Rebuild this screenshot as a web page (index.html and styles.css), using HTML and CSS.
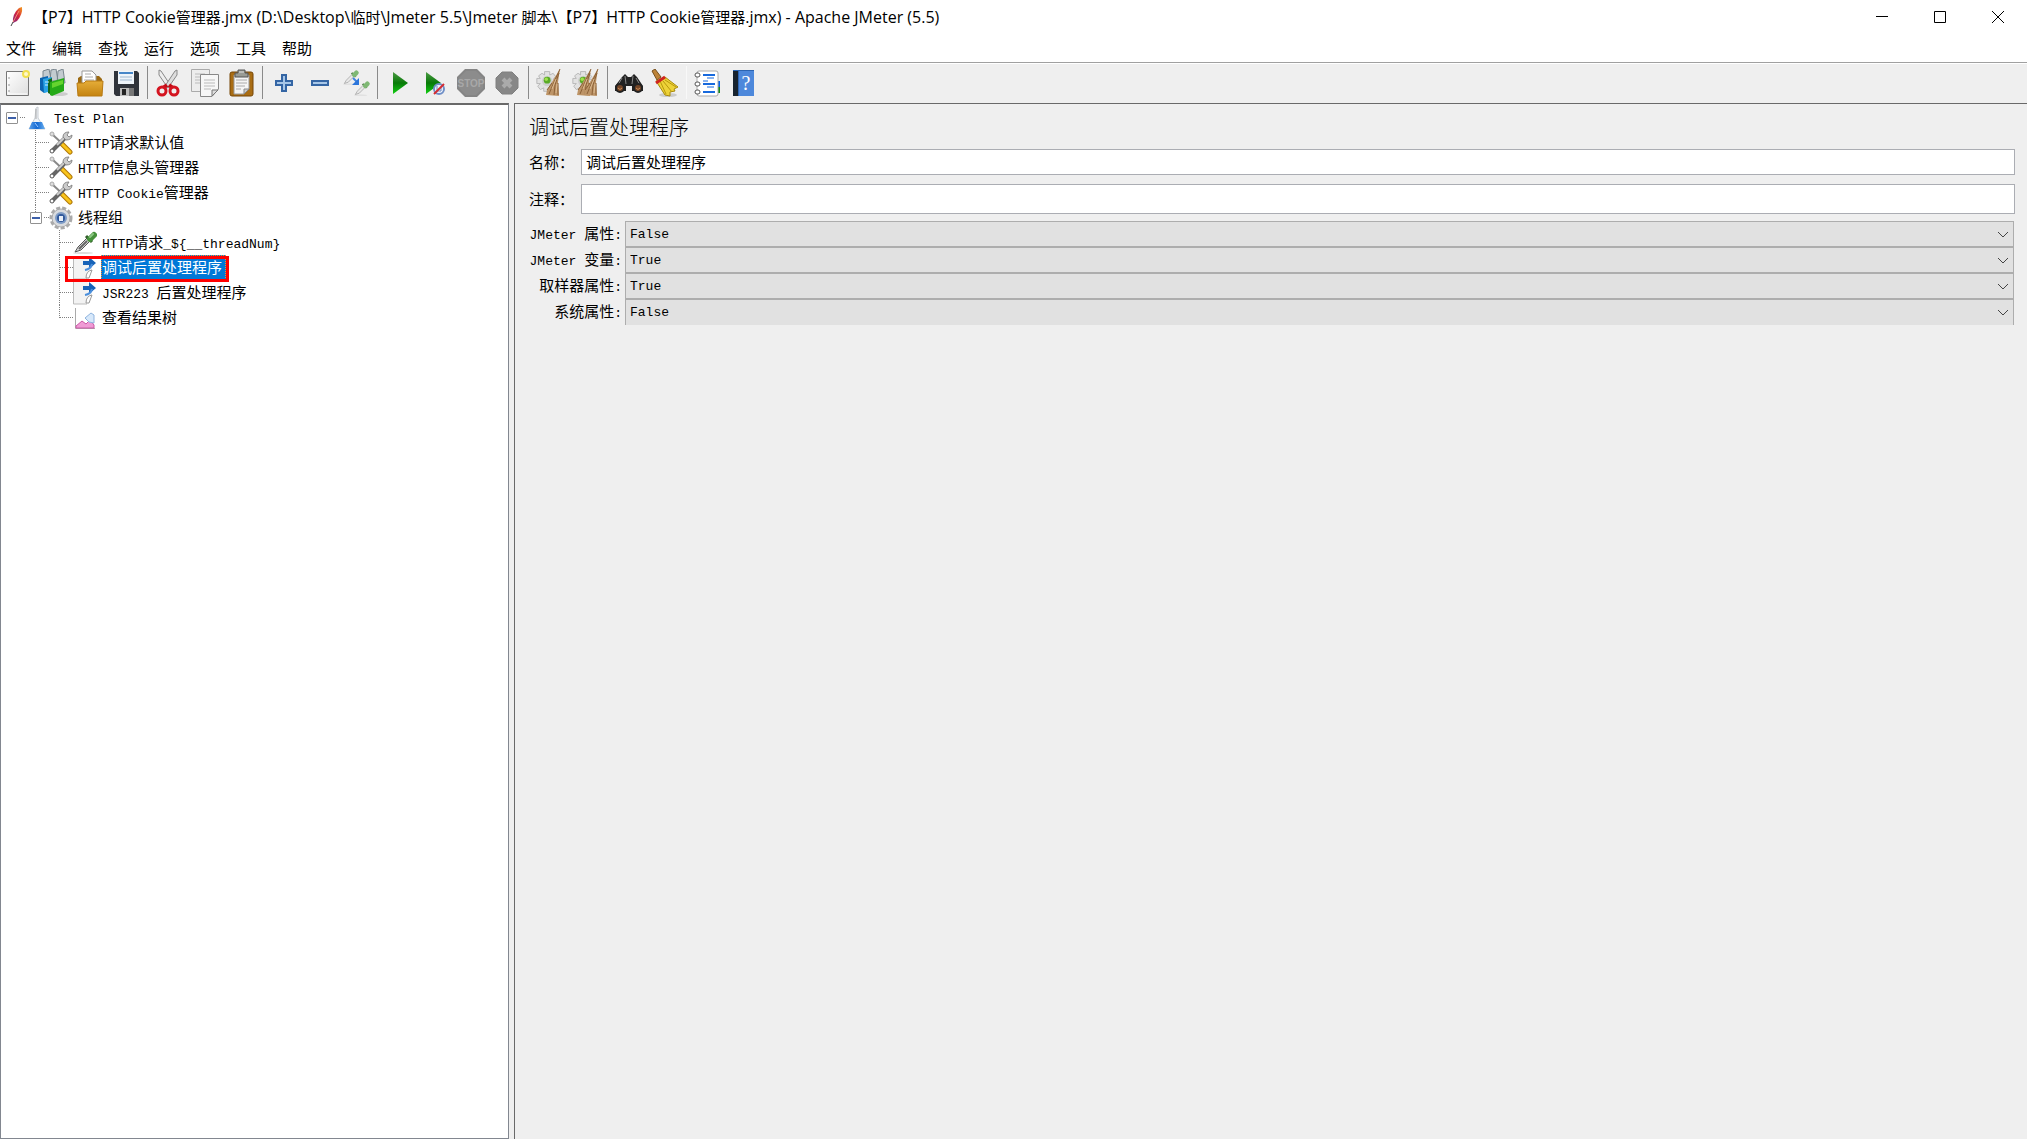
FILE: index.html
```html
<!DOCTYPE html>
<html lang="zh-CN">
<head>
<meta charset="utf-8">
<title>【P7】HTTP Cookie管理器.jmx - Apache JMeter (5.5)</title>
<link rel="stylesheet" href="styles.css">
</head>
<body>
<svg class="defs" aria-hidden="true">
  <defs>
    <linearGradient id="gGreen" x1="0" y1="0" x2="0" y2="1"><stop offset="0" stop-color="#4d9a45"/><stop offset=".5" stop-color="#087a08"/><stop offset="1" stop-color="#12cf12"/></linearGradient>
    <linearGradient id="gGold" x1="0" y1="0" x2="0" y2="1"><stop offset="0" stop-color="#e5ad38"/><stop offset="1" stop-color="#c48310"/></linearGradient>
    <linearGradient id="gPaper" x1="0" y1="0" x2="1" y2="1"><stop offset="0" stop-color="#fff"/><stop offset="1" stop-color="#dedede"/></linearGradient>
    <linearGradient id="gFlask" x1="0" y1="0" x2="1" y2="0"><stop offset="0" stop-color="#5aa0ea"/><stop offset=".5" stop-color="#1268d2"/><stop offset="1" stop-color="#6bb0f0"/></linearGradient>
    <linearGradient id="gFeather" x1="0" y1="1" x2="1" y2="0"><stop offset="0" stop-color="#7a2a85"/><stop offset=".5" stop-color="#d3223f"/><stop offset="1" stop-color="#f6a01c"/></linearGradient>
    <symbol id="tools" viewBox="0 0 24 24">
      <path d="M4 4L17 16" stroke="#888" stroke-width="2"/>
      <circle cx="3" cy="3" r="2" fill="#ddd" stroke="#aaa"/>
      <path d="M13 13L21 21" stroke="#b07808" stroke-width="5" stroke-linecap="round"/>
      <path d="M13 13L21 21" stroke="#f9c51c" stroke-width="3" stroke-linecap="round"/>
      <path d="M3 20L17 6" stroke="#666" stroke-width="4"/>
      <path d="M8 14L17 5" stroke="#ccc" stroke-width="2"/>
      <path d="M14 6Q14 1 20 1L18 4L20 6L23 4Q23 9 17 9Z" fill="#ccc" stroke="#888"/>
      <circle cx="3" cy="20" r="2" fill="#fff" stroke="#555"/>
    </symbol>
    <symbol id="post" viewBox="0 0 24 24">
      <path d="M0 1H14L19 6V14L14 23H0Z" fill="#f3f3f3"/>
      <path d="M.5 1V23H14" fill="none" stroke="#bbb"/>
      <path d="M13 22Q13 15 19 14L16 22Z" fill="#fff" stroke="#999"/>
      <path d="M10 5H16V1L23 7L16 13V9H10Z" fill="#1763b8"/>
      <path d="M12 14Q18 13 19 8" fill="none" stroke="#4b8fdc" stroke-width="2"/>
    </symbol>
    <symbol id="dropper" viewBox="0 0 24 24">
      <ellipse cx="10" cy="22" rx="10" ry="1" fill="#ddd"/>
      <path d="M2 21L5 16L14 7L17 10L8 19Z" fill="#d5d5d5" stroke="#555"/>
      <path d="M6 18L14 10" stroke="#666" stroke-width="2"/>
      <path d="M13 5L19 11" stroke="#315e2b" stroke-width="3"/>
      <path d="M17 8L21 4" stroke="#46913b" stroke-width="6" stroke-linecap="round"/>
      <path d="M17 6L20 3" stroke="#8cc883" stroke-width="2" stroke-linecap="round"/>
    </symbol>
    <symbol id="dropper-light" viewBox="0 0 24 24">
      <ellipse cx="10" cy="22" rx="10" ry="1" fill="#ddd"/>
      <path d="M2 21L5 16L14 7L17 10L8 19Z" fill="#e8e8e8" stroke="#999"/>
      <path d="M13 5L19 11" stroke="#4a7a42" stroke-width="3"/>
      <path d="M17 8L20 5" stroke="#7fb874" stroke-width="7" stroke-linecap="round"/>
    </symbol>
    <symbol id="gear" viewBox="0 0 28 28">
      <path d="M10 3H16V7L20 5L23 9L20 12H25V18H20L22 22L18 25L15 22V26H9V22L5 24L2 20L5 17H1V11H5L3 8L7 5L10 7Z" fill="#e2e2e2" stroke="#b2b2b2"/>
      <circle cx="13" cy="14" r="6" fill="#cecece"/><circle cx="13" cy="13" r="4" fill="#59ab26"/><circle cx="12" cy="12" r="2" fill="#a0df4d"/>
    </symbol>
    <symbol id="straw" viewBox="0 0 16 28">
      <path d="M14 0L12 13L13 27L0 26L1 21L6 13L9 8Z" fill="#bd9467"/>
      <path d="M14 0L8 13L3 25M13 4L9 16L8 26M12 14L12 26M6 14L1 21" stroke="#8c6238" fill="none"/>
      <path d="M10 10L6 20M11 15L10 24" stroke="#ddbc92"/>
    </symbol>
  </defs>
</svg>

<header class="titlebar">
  <svg class="feather" viewBox="0 0 14 20" aria-hidden="true"><path d="M3 16Q2 7 9 1L12 0Q13 7 7 14Z" fill="url(#gFeather)"/><path d="M3 15L9 4" stroke="#f58a70"/><path d="M3 15L1 19" stroke="#444"/></svg>
  <h1 class="title"><span class="cjk">【</span>P7<span class="cjk">】</span>HTTP Cookie<span class="cjk">管理器</span>.jmx (D:\Desktop\<span class="cjk">临时</span>\Jmeter 5.5\Jmeter <span class="cjk">脚本</span>\<span class="cjk">【</span>P7<span class="cjk">】</span>HTTP Cookie<span class="cjk">管理器</span>.jmx) - Apache JMeter (5.5)</h1>
  <div class="controls">
    <button aria-label="最小化"><svg viewBox="0 0 12 12"><path d="M0 5.500H12"/></svg></button>
    <button aria-label="最大化"><svg viewBox="0 0 12 12"><path d="M.5 .5H11.500V11.500H.5Z"/></svg></button>
    <button aria-label="关闭"><svg viewBox="0 0 12 12"><path d="M0 0L12 12M12 0L0 12"/></svg></button>
  </div>
</header>

<nav class="menubar">
  <button>文件</button><button>编辑</button><button>查找</button><button>运行</button><button>选项</button><button>工具</button><button>帮助</button>
</nav>

<div class="toolbar" role="toolbar">
  <button aria-label="新建"><svg viewBox="0 0 28 28"><path d="M2.500 2.500H24.500V26.500H2.500Z" fill="url(#gPaper)" stroke="#777"/><path d="M4 4V25H23" stroke="#fff" fill="none"/><path d="M5 8V10M5 15V17M5 21V23" stroke="#999"/><circle cx="22" cy="5" r="3" fill="#fff8c9" stroke="#f0df4d" stroke-width="2"/></svg></button>
  <button aria-label="模板"><svg viewBox="0 0 28 28"><ellipse cx="19" cy="25" rx="9" ry="2" fill="#ccc"/><path d="M3 2L9 0L11 10H3ZM11 1L16 0L18 12H10ZM18 2L23 0L25 14H17Z" fill="#c3cbd0" stroke="#78858e"/><path d="M0 9L8 7V22L4 24L0 21Z" fill="#0c63af"/><path d="M3 10L12 8V22L4 24Z" fill="#2aa3e6"/><path d="M8 11L12 9V26L8 24Z" fill="#13661a"/><path d="M10 13L24 9V22L12 27L10 26Z" fill="#25aa17"/><path d="M12 14L23 11V15L12 19Z" fill="#65d42e"/><path d="M5 13H9M5 16H8" stroke="#c9efff"/></svg></button>
  <button aria-label="打开"><svg viewBox="0 0 28 28"><path d="M2 9L5 7H23L26 10V26H2Z" fill="#9c6a12"/><path d="M6 2H16L20 6V15H6Z" fill="#fff" stroke="#999"/><path d="M9 5H15M9 8H17M8 11H18" stroke="#aaa"/><path d="M1 14H8L10 12H27L26 27H2Z" fill="url(#gGold)" stroke="#b87a13"/></svg></button>
  <button aria-label="保存"><svg viewBox="0 0 28 28"><path d="M2 2H25L27 4V27H4L2 25Z" fill="#30343b"/><path d="M6 2H22V15H6Z" fill="#eef4fa"/><path d="M7 4H21" stroke="#4686c8" stroke-width="2"/><path d="M8 8H20M8 11H20" stroke="#9fb8d0"/><path d="M8 19H22V27H8Z" fill="#bbb"/><path d="M10 20H14V26H10Z" fill="#222"/><path d="M17 19H22V27H17Z" fill="#777"/></svg></button>
  <span class="sep"></span>
  <button aria-label="剪切"><svg viewBox="0 0 28 28"><path d="M4 1L6 2L16 17L13 19L4 6Z" fill="#eee" stroke="#888"/><path d="M22 1L20 2L10 17L13 19L22 6Z" fill="#ddd" stroke="#888"/><path d="M12 16L8 19M14 16L18 19" stroke="#c00d16" stroke-width="4"/><circle cx="7" cy="22" r="4" fill="#eee" stroke="#d41420" stroke-width="3"/><circle cx="19" cy="22" r="4" fill="#eee" stroke="#d41420" stroke-width="3"/></svg></button>
  <button aria-label="复制"><svg viewBox="0 0 28 28"><path d="M.5 .5H18.500V22.500H.5Z" fill="#ededed" stroke="#aaa"/><path d="M4 5H14M4 8H9M4 11H9M4 14H9" stroke="#bbb"/><path d="M9.500 5.500H27.500V20L21 27.500H9.500Z" fill="#f7f7f7" stroke="#888"/><path d="M13 11H24M13 14H24M13 17H24M13 20H20" stroke="#bbb"/><path d="M21 27V21H27Z" fill="#ddd" stroke="#777"/></svg></button>
  <button aria-label="粘贴"><svg viewBox="0 0 28 28"><rect x="3" y="3" width="23" height="24" rx="2" fill="#a96d14" stroke="#764706"/><path d="M7 6H22V20L17 25H7Z" fill="#f5f5f5" stroke="#999"/><path d="M17 25V20H22Z" fill="#ccc" stroke="#888"/><path d="M9 11H20M9 14H20M9 17H18M9 20H14" stroke="#aaa"/><path d="M8 8V4H11V1H18V4H21V8Z" fill="#999b94" stroke="#555"/><path d="M12 3H17" stroke="#ddd"/></svg></button>
  <span class="sep"></span>
  <button aria-label="全部展开"><svg viewBox="0 0 28 28"><path d="M12 6H16V12H22V16H16V22H12V16H6V12H12Z" fill="#a7c6e7" stroke="#3465a4" stroke-width="2"/></svg></button>
  <button aria-label="全部折叠"><svg viewBox="0 0 28 28"><path d="M6 12H22V16H6Z" fill="#a7c6e7" stroke="#3465a4" stroke-width="2"/></svg></button>
  <button aria-label="切换"><svg viewBox="0 0 28 28"><use href="#dropper-light" x="1" y="0" width="16" height="17"/><use href="#dropper-light" x="12" y="11" width="16" height="17"/><path d="M11 9L15 13" stroke="#3f83de" stroke-width="2"/><path d="M17 9V16H10Z" fill="#2c76db"/></svg></button>
  <span class="sep"></span>
  <button aria-label="启动"><svg viewBox="0 0 28 28"><path d="M8 3L23 14L8 25Z" fill="url(#gGreen)"/></svg></button>
  <button aria-label="不停顿启动"><svg viewBox="0 0 28 28"><path d="M5 3L20 14L5 25Z" fill="url(#gGreen)"/><circle cx="18" cy="20" r="5" fill="#f2f5fc" stroke="#6f8fc7" stroke-width="2"/><path d="M16 17V22H20V18" stroke="#6688c0" fill="none"/><path d="M13 25L23 15" stroke="#d52b31" stroke-width="2"/></svg></button>
  <button aria-label="停止" disabled><svg viewBox="0 0 28 28"><path d="M8 0H20L28 8V20L20 28H8L0 20V8Z" fill="#858585"/><path d="M9 2H19L26 9V19L19 26H9L2 19V9Z" fill="#8c8c8c"/><text x="14" y="18" text-anchor="middle" class="stop">STOP</text></svg></button>
  <button aria-label="关闭运行" disabled><svg viewBox="0 0 28 28"><path d="M9 3H19L25 9V19L19 25H9L3 19V9Z" fill="#878787" stroke="#808080"/><path d="M10 10L18 18M18 10L10 18" stroke="#ababab" stroke-width="4"/></svg></button>
  <span class="sep"></span>
  <button aria-label="清除"><svg viewBox="0 0 28 28"><use href="#gear" width="24" height="24"/><use href="#straw" x="10" y="0" width="16" height="28"/></svg></button>
  <button aria-label="清除全部"><svg viewBox="0 0 28 28"><use href="#gear" width="24" height="24"/><use href="#straw" x="5" y="0" width="16" height="28"/><use href="#straw" x="12" y="0" width="16" height="28"/></svg></button>
  <span class="sep"></span>
  <button aria-label="查找"><svg viewBox="0 0 28 28"><path d="M7 8L10 5L13 8H16L19 5L22 8L28 17V22H17V17H11V22H0V17Z" fill="#222"/><path d="M7 9L3 16M21 9L25 16M10 7L11 15M18 7L17 15" stroke="#888"/><circle cx="5" cy="19" r="4" fill="#734526" stroke="#222" stroke-width="2"/><circle cx="23" cy="19" r="4" fill="#734526" stroke="#222" stroke-width="2"/><path d="M3 19Q5 22 7 19M21 19Q23 22 25 19" stroke="#ca8b58" fill="none"/></svg></button>
  <button aria-label="重置查找"><svg viewBox="0 0 28 28"><ellipse cx="17" cy="26" rx="9" ry="2" fill="#ccc"/><path d="M1 2L4 0L10 8L6 11Z" fill="#bd8338" stroke="#76501f"/><path d="M5 12L14 8L27 18L23 20L24 22L19 23L19 27L14 26Z" fill="#edd238" stroke="#a8890d"/><path d="M9 12L15 25M12 12L21 23M14 11L25 18" stroke="#b8980d"/><path d="M5 14L14 8" stroke="#cf2420" stroke-width="3"/></svg></button>
  <span class="sep sep-faint"></span>
  <button aria-label="函数助手"><svg viewBox="0 0 28 28"><path d="M23 12H26V18H23Z" fill="#0865e8"/><path d="M23 18H26V24H23Z" fill="#118b15"/><rect x="3" y="2" width="21" height="25" rx="2" fill="#fff" stroke="#aaa"/><path d="M9 6H21M9 15H21M9 23H21" stroke="#1769dd" stroke-width="2"/><path d="M13 9H20M13 18H20M9 12H14" stroke="#1769dd"/><g fill="#fff" stroke="#555"><rect x="1" y="4" width="5" height="4" rx="2"/><rect x="1" y="13" width="5" height="4" rx="2"/><rect x="1" y="21" width="5" height="4" rx="2"/></g></svg></button>
  <button aria-label="帮助"><svg viewBox="0 0 28 28"><path d="M3 1H24V27H3Z" fill="#4d88db"/><path d="M3 1H8V27H3Z" fill="#17232f"/><path d="M8.500 1V27M3 1.500H24" stroke="#2c64b1"/><text x="16" y="21" text-anchor="middle" class="help">?</text></svg></button>
</div>

<main class="split">
  <aside class="tree">
    <ul>
      <li>
        <div class="row"><button class="toggle" aria-label="折叠"></button><span class="stem"></span><svg class="icon" viewBox="0 0 24 24"><path d="M11 2L13 1V12L20 23H4L10 12Z" fill="#eef2f6" stroke="#c8cdd3"/><path d="M7 16H17L20 23H4Z" fill="url(#gFlask)"/><path d="M11 3V13" stroke="#aaa"/><path d="M10 17L13 21" stroke="#9fcaff"/></svg><span class="label"><span class="mono">Test Plan</span></span></div>
        <ul>
          <li><div class="row leaf"><span class="stem"></span><svg class="icon"><use href="#tools"/></svg><span class="label"><span class="mono">HTTP</span>请求默认值</span></div></li>
          <li><div class="row leaf"><span class="stem"></span><svg class="icon"><use href="#tools"/></svg><span class="label"><span class="mono">HTTP</span>信息头管理器</span></div></li>
          <li><div class="row leaf"><span class="stem"></span><svg class="icon"><use href="#tools"/></svg><span class="label"><span class="mono">HTTP Cookie</span>管理器</span></div></li>
          <li>
            <div class="row"><button class="toggle" aria-label="折叠"></button><span class="stem"></span><svg class="icon" viewBox="0 0 24 24"><circle cx="12" cy="12" r="10" fill="none" stroke="#aaa" stroke-width="3" stroke-dasharray="4 2"/><circle cx="12" cy="12" r="9" fill="#d9dbde" stroke="#aaa"/><circle cx="12" cy="12" r="6" fill="#7f9cc6"/><circle cx="12" cy="12" r="4" fill="#31599b"/><rect x="10" y="10" width="4" height="5" fill="#e8eff8"/></svg><span class="label">线程组</span></div>
            <ul>
              <li><div class="row leaf"><span class="stem"></span><svg class="icon"><use href="#dropper"/></svg><span class="label"><span class="mono">HTTP</span>请求<span class="mono">_${__threadNum}</span></span></div></li>
              <li><div class="row leaf selected"><span class="stem"></span><svg class="icon"><use href="#post"/></svg><span class="label">调试后置处理程序</span></div></li>
              <li><div class="row leaf"><span class="stem"></span><svg class="icon"><use href="#post"/></svg><span class="label"><span class="mono">JSR223 </span>后置处理程序</span></div></li>
              <li><div class="row leaf"><span class="stem"></span><svg class="icon" viewBox="0 0 24 24"><path d="M2.500 2V22.500H22" stroke="#aaa" fill="none"/><path d="M3 20L9 15L13 18L17 14L21 19V22H3Z" fill="#ef9bd5" stroke="#cc58a7"/><path d="M12 12L18 7L21 9V17L16 16Z" fill="#d7e8fa" stroke="#8fb4df"/></svg><span class="label">查看结果树</span></div></li>
            </ul>
          </li>
        </ul>
      </li>
    </ul>
  </aside>

  <section class="panel">
    <h2>调试后置处理程序</h2>
    <div class="field"><label for="name">名称：</label><input id="name" type="text" value="调试后置处理程序"></div>
    <div class="field comment"><label for="comment">注释：</label><input id="comment" type="text"></div>
    <div class="props">
      <label for="p1"><span class="mono">JMeter </span>属性<span class="mono">:</span></label>
      <div class="pick"><select id="p1"><option>False</option><option>True</option></select><svg viewBox="0 0 10 6"><path d="M0 0L5 5L10 0"/></svg></div>
      <label for="p2"><span class="mono">JMeter </span>变量<span class="mono">:</span></label>
      <div class="pick"><select id="p2"><option>True</option><option>False</option></select><svg viewBox="0 0 10 6"><path d="M0 0L5 5L10 0"/></svg></div>
      <label for="p3">取样器属性<span class="mono">:</span></label>
      <div class="pick"><select id="p3"><option>True</option><option>False</option></select><svg viewBox="0 0 10 6"><path d="M0 0L5 5L10 0"/></svg></div>
      <label for="p4">系统属性<span class="mono">:</span></label>
      <div class="pick"><select id="p4"><option>False</option><option>True</option></select><svg viewBox="0 0 10 6"><path d="M0 0L5 5L10 0"/></svg></div>
    </div>
  </section>
</main>
</body>
</html>
```
FILE: styles.css
```css
*, *::before, *::after { box-sizing: border-box; }

body {
  margin: 0;
  min-height: 100vh;
  display: flex;
  flex-direction: column;
  background: #efefef;
  color: #000;
  font: 15px/24px "Noto Sans CJK SC", sans-serif;
}

button, input, select { font: inherit; color: inherit; }
button { border: 0; padding: 0; background: none; }
ul { list-style: none; margin: 0; padding: 0; }
.defs { position: absolute; width: 0; height: 0; }

.mono {
  font-family: "Liberation Mono", monospace;
  font-size: 13px;
  line-height: 1;
  white-space: pre;
}

/* Title bar */
.titlebar {
  display: flex;
  align-items: center;
  height: 34px;
  padding-left: 10px;
  background: #fff;
}
.feather { width: 14px; height: 20px; margin-right: 9px; }
.title {
  flex: 1;
  margin: 0;
  font: 16px/34px "Open Sans", sans-serif;
  white-space: nowrap;
  overflow: hidden;
}
.cjk {
  font: 15px/1 "Noto Sans CJK SC", sans-serif;
}
.controls { display: flex; }
.controls button {
  width: 58px;
  height: 34px;
  display: grid;
  place-items: center;
}
.controls svg { width: 12px; height: 12px; fill: none; stroke: #000; }

/* Menu */
.menubar {
  display: flex;
  gap: 16px;
  height: 29px;
  padding-left: 6px;
  background: #fff;
  border-bottom: 1px solid #a0a0a0;
}

/* Toolbar */
.toolbar {
  display: flex;
  align-items: center;
  height: 40px;
  padding-bottom: 2px;
  border-top: 1px solid #fff;
}
.toolbar button {
  width: 36px;
  height: 36px;
  display: grid;
  place-items: center;
}
.toolbar svg { width: 28px; height: 28px; }
.sep {
  width: 7px;
  height: 33px;
  background: linear-gradient(#8a8a8a, #8a8a8a) center / 1px 100% no-repeat;
}
.sep-faint { background-image: linear-gradient(#f8f8f8, #f8f8f8); }
.stop { font: bold 10px "Liberation Sans Narrow", "Liberation Sans", sans-serif; fill: #a8a8a8; }
.help { font: 20px "Liberation Serif", serif; fill: #fff; }

/* Split pane */
.split {
  flex: 1;
  display: grid;
  grid-template-columns: 509px 1fr;
  column-gap: 5px;
}
.tree {
  border: 1px solid #828790;
  border-top: 2px solid #696969;
  background: #fff;
}

.tree li li { position: relative; }
.tree li ul { padding-left: 24px; }
.tree li li::before {
  content: "";
  position: absolute;
  left: 10px;
  top: 0;
  width: 1px;
  height: 100%;
  background: repeating-linear-gradient(#808080 0 1px, transparent 1px 2px);
}
.tree li li:last-child::before { height: 13px; }

.row {
  position: relative;
  display: flex;
  align-items: center;
  height: 25px;
  padding-left: 5px;
}
.row.leaf { padding-left: 11px; }
.toggle {
  width: 12px;
  height: 12px;
  margin-right: 2px;
  border: 1px solid #919191;
  border-radius: 1px;
  background: linear-gradient(#3c5fa8, #3c5fa8) center / 8px 2px no-repeat, #fff;
}
.stem {
  width: 5px;
  height: 1px;
  background: repeating-linear-gradient(90deg, #808080 0 1px, transparent 1px 2px);
}
.leaf .stem { width: 13px; }
.icon { width: 24px; height: 24px; }
.label {
  height: 25px;
  margin-left: 4px;
  padding: 0 1px;
  white-space: nowrap;
}
.selected .label {
  padding: 0 3px 0 0;
  border: 1px dotted #ff8728;
  line-height: 22px;
  background: #0078d7;
  color: #fff;
}
.selected::after {
  content: "";
  position: absolute;
  left: 16px;
  top: 1px;
  width: 164px;
  height: 26px;
  border: 3px solid #f00;
  z-index: 1;
}

/* Property panel */
.panel {
  border-left: 1px solid #696969;
  border-top: 1px solid #696969;
  padding: 8px 12px 0 14px;
}
.panel h2 {
  margin: 0 0 7px;
  font-size: 20px;
  line-height: 30px;
  font-weight: 300;
}
.field { display: flex; align-items: center; height: 26px; }
.field label { width: 52px; white-space: nowrap; }
.field input {
  flex: 1;
  min-width: 0;
  height: 100%;
  padding: 0 4px 2px;
  border: 1px solid #abadb3;
  background: #fff;
}
.comment { height: 30px; margin: 9px 0 7px; }

.props {
  display: grid;
  grid-template-columns: 93px 1fr;
  grid-auto-rows: 26px;
  column-gap: 3px;
  padding-right: 1px;
}
.props label { text-align: right; white-space: nowrap; }
.pick { position: relative; }
.pick select {
  display: block;
  width: 100%;
  height: 26px;
  padding: 0 4px;
  appearance: none;
  border: 1px solid #adadad;
  border-radius: 0;
  background: #e1e1e1;
  font: 13px "Liberation Mono", monospace;
}
.pick:last-child select { border-bottom: 0; }
.pick svg {
  position: absolute;
  right: 6px;
  top: 11px;
  width: 10px;
  height: 6px;
  fill: none;
  stroke: #444;
  pointer-events: none;
}
```
